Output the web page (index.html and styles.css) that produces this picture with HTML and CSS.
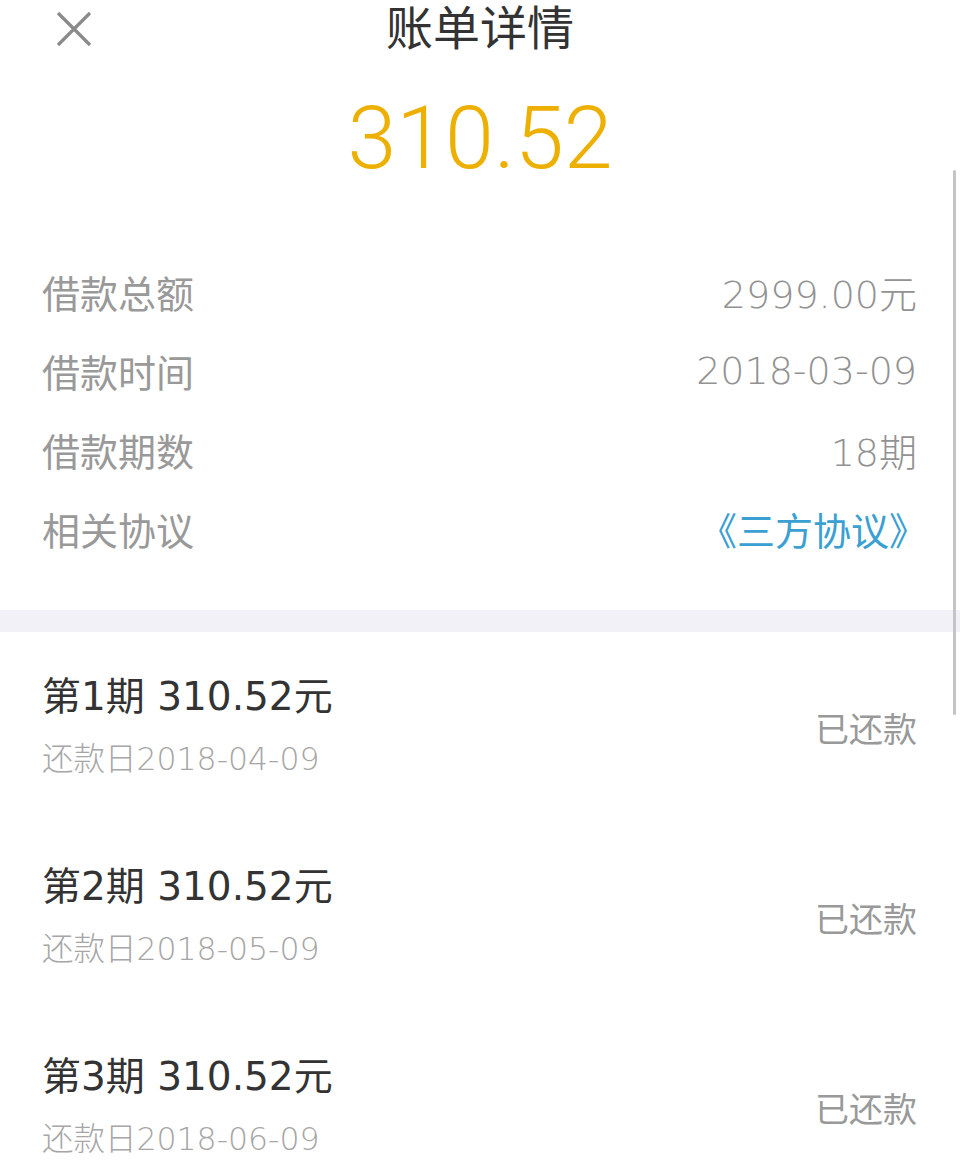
FILE: index.html
```html
<!DOCTYPE html>
<html lang="zh-CN">
<head>
  <meta charset="UTF-8" />
  <meta name="viewport" content="width=device-width, initial-scale=1.0" />
  <title>账单详情</title>
  <link rel="stylesheet" href="styles.css">
</head>
<body>
  <!-- Header -->
  <div class="header">
    <div class="close-btn">
      <svg width="36" height="36" viewBox="0 0 36 36">
        <path d="M2 2 L34 34 M34 2 L2 34" stroke="#8a8a8a" stroke-width="3.2" fill="none" />
      </svg>
    </div>
    <h1 class="title">账单详情</h1>
    <div></div>
  </div>

  <div class="amount">310.52</div>

  <!-- Loan info -->
  <div class="info">
    <div class="info-row"><span>借款总额</span><span class="value">2999.00元</span></div>
    <div class="info-row"><span>借款时间</span><span class="value">2018-03-09</span></div>
    <div class="info-row"><span>借款期数</span><span class="value">18期</span></div>
    <div class="info-row"><span>相关协议</span><a class="link" href="#">《三方协议》</a></div>
  </div>

  <div class="divider"></div>

  <!-- Repayment plan -->
  <div class="plans">
    <div class="plan">
      <div>
        <div class="plan-title">第1期 310.52元</div>
        <div class="plan-date">还款日2018-04-09</div>
      </div>
      <div class="plan-status">已还款</div>
    </div>
    <div class="plan">
      <div>
        <div class="plan-title">第2期 310.52元</div>
        <div class="plan-date">还款日2018-05-09</div>
      </div>
      <div class="plan-status">已还款</div>
    </div>
    <div class="plan">
      <div>
        <div class="plan-title">第3期 310.52元</div>
        <div class="plan-date">还款日2018-06-09</div>
      </div>
      <div class="plan-status">已还款</div>
    </div>
  </div>

  <div class="scrollbar"></div>
</body>
</html>
```
FILE: styles.css
```css
body {
  margin: 0;
  background: white;
  font-family: "DejaVu Sans", "Noto Sans CJK SC", sans-serif;
  color: #333;
  position: relative;
  overflow: hidden;
}
.header {
  height: 58px;
  display: grid;
  grid-template-columns: 1fr auto 1fr;
  align-items: center;
}
.close-btn {
  padding-left: 56px;
  height: 36px;
}
.title {
  margin: 0;
  font-size: 47px;
  font-weight: normal;
  color: #333;
  line-height: 58px;
}
.amount {
  height: 160px;
  line-height: 160px;
  text-align: center;
  font-family: Roboto, sans-serif;
  font-weight: 300;
  font-size: 88px;
  color: #eeb000;
}
.info {
  padding: 34px 43px 0 42px;
}
.info-row {
  height: 79px;
  display: flex;
  justify-content: space-between;
  align-items: center;
  font-size: 38px;
  color: #999;
}
.value {
  font-weight: 200;
  color: #929292;
}
.link {
  color: #3a9fd2;
  text-decoration: none;
  margin-right: -10px;
}
.divider {
  margin-top: 42px;
  height: 22px;
  background: #f2f1f8;
}
.plan {
  height: 190px;
  box-sizing: border-box;
  padding: 43px 43px 0 42px;
  display: flex;
  justify-content: space-between;
  align-items: flex-start;
}
.plan-title {
  font-size: 39px;
  line-height: 43px;
  color: #333;
}
.plan-date {
  margin-top: 21px;
  font-size: 31.5px;
  line-height: 40px;
  color: #a6a6a6;
  font-weight: 200;
}
.plan-status {
  margin-top: 35px;
  font-size: 34px;
  line-height: 40px;
  color: #999;
}
/* scroll indicator on the right edge */
.scrollbar {
  position: absolute;
  right: 4px;
  top: 170px;
  width: 3px;
  height: 545px;
  background: #c4c4c4;
  border-radius: 2px;
}
```
